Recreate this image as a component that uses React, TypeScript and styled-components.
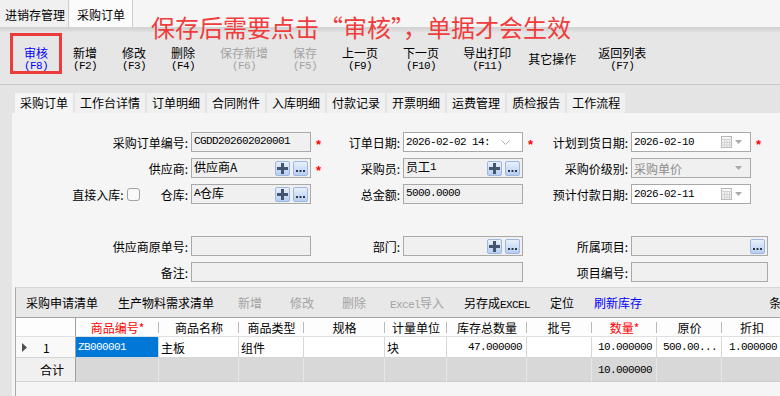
import React from 'react'
import styled, { createGlobalStyle } from 'styled-components'

const SANS = `"Noto Sans CJK SC", "Noto Sans", sans-serif`
const MONO = `"Liberation Mono", "Noto Sans CJK SC", monospace`

const GlobalStyle = createGlobalStyle`
  html, body { margin: 0; padding: 0; background: #f0f0f0; }
  body { font-family: ${SANS}; font-size: 12px; color: #000; }
  * { box-sizing: border-box; }
`

type Tone = 'normal' | 'disabled' | 'primary'
const toneColor = (t?: Tone) =>
  t === 'disabled' ? '#a3a3a3' : t === 'primary' ? '#0000ff' : '#000'

const TOOL_BUTTONS: { title: string; hotkey?: string; tone?: Tone; gap: number }[] = [
  { title: '审核', hotkey: '(F8)', tone: 'primary', gap: 0 },
  { title: '新增', hotkey: '(F2)', gap: 25 },
  { title: '修改', hotkey: '(F3)', gap: 25 },
  { title: '删除', hotkey: '(F4)', gap: 25 },
  { title: '保存新增', hotkey: '(F6)', tone: 'disabled', gap: 25 },
  { title: '保存', hotkey: '(F5)', tone: 'disabled', gap: 25 },
  { title: '上一页', hotkey: '(F9)', gap: 25 },
  { title: '下一页', hotkey: '(F10)', gap: 25 },
  { title: '导出打印', hotkey: '(F11)', gap: 24 },
  { title: '其它操作', gap: 17 },
  { title: '返回列表', hotkey: '(F7)', gap: 22 },
]

const SUB_TABS = ['采购订单', '工作台详情', '订单明细', '合同附件', '入库明细', '付款记录', '开票明细', '运费管理', '质检报告', '工作流程']

const GRID_COLS = [60, 83, 80, 65, 81, 62, 80, 65, 65, 65, 60]
const GRID_HEAD: { title: string; required?: boolean }[] = [
  { title: '商品编号*', required: true },
  { title: '商品名称' },
  { title: '商品类型' },
  { title: '规格' },
  { title: '计量单位' },
  { title: '库存总数量' },
  { title: '批号' },
  { title: '数量*', required: true },
  { title: '原价' },
  { title: '折扣' },
]

const Window = styled.div`
  position: relative;
  width: 780px;
  height: 396px;
  overflow: hidden;
  display: flex;
  flex-direction: column;
  background: #e4e4e4;
  font-family: ${SANS};
  font-size: 12px;
`

const PageTabs = styled.div`
  height: 28px;
  display: flex;
  background: #f5f5f5;
  border-bottom: 1px solid #d4d4d4;
`

const PageTab = styled.div<{ $active?: boolean }>`
  display: flex;
  align-items: center;
  padding: ${({ $active }) => ($active ? '2px 7px 0' : '2px 3px 0 5px')};
  margin-right: ${({ $active }) => ($active ? 0 : 1)}px;
  background: ${({ $active }) => ($active ? '#fbfbfb' : '#f0f0f0')};
  border-right: 1px solid #cfcfcf;
  white-space: nowrap;
`

const Toolbar = styled.div`
  position: relative;
  height: 57px;
  display: flex;
  align-items: center;
  padding: 6px 0 0 24px;
  background: linear-gradient(#d2d2d2, #e6e6e6 5px, #e6e6e6);
  border-bottom: 1px solid #c8c8c8;
`

const ToolButton = styled.div<{ $tone?: Tone; $gap: number }>`
  display: flex;
  flex-direction: column;
  align-items: center;
  margin-left: ${({ $gap }) => $gap}px;
  line-height: 14px;
  color: ${({ $tone }) => toneColor($tone)};
  white-space: nowrap;
`

const Hotkey = styled.span`
  font-family: ${MONO};
  font-size: 11px;
  line-height: 12px;
  letter-spacing: -0.6px;
`

const HighlightBox = styled.div`
  position: absolute;
  left: 10px;
  top: 5px;
  width: 52px;
  height: 41px;
  border: 3px solid #ec3b3b;
`

const Annotation = styled.div`
  position: absolute;
  left: 151px;
  top: 12px;
  font-size: 24px;
  line-height: 30px;
  color: #f03c3c;
  white-space: nowrap;
`

const Body = styled.div`
  flex: 1;
  min-height: 0;
  display: flex;
  flex-direction: column;
  padding-left: 12px;
`

const SubTabs = styled.div`
  height: 28px;
  display: flex;
  gap: 2px;
  padding: 8px 0 0 3px;
`

const SubTab = styled.div<{ $active?: boolean }>`
  height: 20px;
  line-height: 20px;
  padding: 0 5px;
  background: ${({ $active }) => ($active ? '#f5f5f5' : '#f0f0f0')};
  white-space: nowrap;
`

const Panel = styled.div`
  flex: 1;
  display: flex;
  flex-direction: column;
  background: #f5f5f5;
`

const Form = styled.div`
  display: grid;
  grid-template-columns: 179px 120px 20px 72px 120px 20px 88px 120px 29px;
  grid-auto-rows: 20px;
  row-gap: 6px;
  padding-top: 19px;
`

const Label = styled.div`
  display: flex;
  align-items: center;
  justify-content: flex-end;
  padding-right: 3px;
  white-space: nowrap;
`

const Check = styled.span`
  width: 13px;
  height: 13px;
  margin: 0 21px 0 3px;
  border: 1px solid #a2a2a2;
  border-radius: 3px;
  background: #f9f9f9;
`

const Star = styled.div`
  display: flex;
  align-items: center;
  padding: 5px 0 0 5px;
  font-family: "Liberation Sans", sans-serif;
  font-weight: bold;
  font-size: 13px;
  color: #ff0000;
`

const BlankRow = styled.div`
  grid-column: 1 / -1;
`

type FieldTone = 'readonly' | 'white' | 'disabled'

const Field = styled.div<{ $tone?: FieldTone; $span?: number; $width?: number }>`
  grid-column: ${({ $span }) => ($span ? `span ${$span}` : 'auto')};
  width: ${({ $width }) => ($width ? `${$width}px` : 'auto')};
  height: 20px;
  display: flex;
  align-items: center;
  padding: 0 2px;
  border: 1px solid #a9a9a9;
  background: ${({ $tone }) => ($tone === 'white' ? '#fff' : '#f0f0f0')};
  color: ${({ $tone }) => ($tone === 'disabled' ? '#8c8c8c' : '#000')};
  white-space: nowrap;
  overflow: hidden;
`

const Value = styled.span<{ $raise?: boolean }>`
  flex: 1;
  align-self: stretch;
  display: flex;
  align-items: center;
  padding-bottom: ${({ $raise }) => ($raise ? 3 : 0)}px;
`

const Mono = styled.span`
  font-family: ${MONO};
  font-size: 11px;
  letter-spacing: -0.6px;
`

const MiniButton = styled.span`
  width: 15px;
  height: 15px;
  margin-left: 3px;
  display: inline-flex;
  align-items: center;
  justify-content: center;
  border: 1px solid #9db7e0;
  border-radius: 2px;
  background: linear-gradient(#e8f0fc, #b7cef2);
`

const IconSlot = styled.span<{ $right: number }>`
  display: flex;
  align-items: center;
  gap: 3px;
  margin-right: ${({ $right }) => $right}px;
`

const GridSection = styled.div`
  flex: 1;
  margin: 5px 0 0 3px;
  border-left: 1px solid #a9a9a9;
  border-top: 1px solid #d6d6d6;
  background: #f5f5f5;
`

const GridToolbar = styled.div`
  height: 30px;
  display: flex;
  align-items: center;
  background: #e8e8e8;
  border-bottom: 1px solid #a3a3a3;
  white-space: nowrap;
`

const GridTool = styled.div<{ $tone?: Tone; $wide?: boolean; $push?: number }>`
  display: flex;
  align-items: baseline;
  justify-content: center;
  min-width: ${({ $wide }) => ($wide ? '52px' : 'auto')};
  padding: ${({ $wide }) => ($wide ? 0 : '0 10px')};
  margin-left: ${({ $push }) => $push ?? 0}px;
  color: ${({ $tone }) => toneColor($tone)};
`

const Grid = styled.div`
  display: grid;
  grid-template-columns: ${GRID_COLS.map((c) => `${c}px`).join(' ')};
  grid-template-rows: 19px 21px 24px;
  width: max-content;
`

const HeadCell = styled.div<{ $required?: boolean }>`
  position: relative;
  display: flex;
  align-items: center;
  justify-content: center;
  background: #fdfdfd;
  border-bottom: 1px solid #e0e0e0;
  color: ${({ $required }) => ($required ? '#ff0000' : '#000')};
  white-space: nowrap;
  &::after {
    content: '';
    position: absolute;
    right: 0;
    top: 4px;
    bottom: 3px;
    width: 1px;
    background: #b9b9b9;
  }
`

const RowHead = styled.div<{ $total?: boolean; $head?: boolean }>`
  display: flex;
  align-items: center;
  justify-content: ${({ $total }) => ($total ? 'flex-end' : 'flex-start')};
  padding: ${({ $total }) => ($total ? '0 11px 0 0' : '0 0 0 6px')};
  background: ${({ $total, $head }) => ($head ? '#fdfdfd' : $total ? '#f0f0f0' : '#f9f9f9')};
  border-right: 1px solid #9d9d9d;
  border-bottom: 1px solid ${({ $head }) => ($head ? '#e0e0e0' : '#d4d4d4')};
`

const RowNo = styled.span`
  margin-left: 16px;
`

const Cell = styled.div<{ $right?: boolean; $selected?: boolean; $total?: boolean }>`
  display: flex;
  align-items: center;
  justify-content: ${({ $right }) => ($right ? 'flex-end' : 'flex-start')};
  padding: 0 4px 0 2px;
  background: ${({ $selected, $total }) => ($selected ? '#0078d7' : $total ? '#d8d8d8' : '#fff')};
  color: ${({ $selected }) => ($selected ? '#fff' : '#000')};
  border-right: 1px solid ${({ $total }) => ($total ? '#e6e6e6' : '#d6d6d6')};
  border-bottom: 1px solid ${({ $total }) => ($total ? '#cccccc' : '#d6d6d6')};
  white-space: nowrap;
  overflow: hidden;
`

const PlusIcon = () => (
  <svg width="11" height="11" viewBox="0 0 11 11">
    <path d="M4 0h3v4h4v3H7v4H4V7H0V4h4z" fill="#44566f" />
  </svg>
)

const DotsIcon = () => (
  <svg width="11" height="11" viewBox="0 0 11 11">
    <rect x="1" y="7" width="2" height="2" fill="#2c3a50" />
    <rect x="4.5" y="7" width="2" height="2" fill="#2c3a50" />
    <rect x="8" y="7" width="2" height="2" fill="#2c3a50" />
  </svg>
)

const Lookup: React.FC<{ plus?: boolean }> = ({ plus = true }) => (
  <>
    {plus && (
      <MiniButton>
        <PlusIcon />
      </MiniButton>
    )}
    <MiniButton>
      <DotsIcon />
    </MiniButton>
  </>
)

const Chevron = () => (
  <svg width="9" height="5" viewBox="0 0 9 5">
    <polyline points="0.5,0.5 4.5,4.5 8.5,0.5" fill="none" stroke="#b4b4b4" />
  </svg>
)

const DropTriangle = () => (
  <svg width="7" height="4" viewBox="0 0 7 4">
    <path d="M0 0h7L3.5 4z" fill="#a9a9a9" />
  </svg>
)

const CalendarIcon = () => (
  <svg width="11" height="12" viewBox="0 0 11 12">
    <rect x="0.5" y="0.5" width="10" height="11" fill="#f6f6f6" stroke="#b7b7b7" />
    <path d="M0.5 3.5h10M0.5 6.5h10M0.5 9h10M3.5 3.5v8M6 3.5v8M8.5 3.5v8" stroke="#d2d2d2" />
  </svg>
)

const RowArrow = () => (
  <svg width="5" height="9" viewBox="0 0 5 9">
    <path d="M0 0l5 4.5L0 9z" fill="#4f4f4f" />
  </svg>
)

const DateField: React.FC<{ value: string }> = ({ value }) => (
  <Field $tone="white">
    <Value>
      <Mono>{value}</Mono>
    </Value>
    <IconSlot $right={6}>
      <CalendarIcon />
      <DropTriangle />
    </IconSlot>
  </Field>
)

const App: React.FC = () => {
  return (
    <>
      <GlobalStyle />
      <Window>
        <PageTabs>
          <PageTab>进销存管理</PageTab>
          <PageTab $active>采购订单</PageTab>
        </PageTabs>

        <Toolbar>
          <HighlightBox />
          {TOOL_BUTTONS.map((b) => (
            <ToolButton key={b.title} $tone={b.tone} $gap={b.gap}>
              <span>{b.title}</span>
              {b.hotkey && <Hotkey>{b.hotkey}</Hotkey>}
            </ToolButton>
          ))}
        </Toolbar>

        <Annotation>保存后需要点击“审核”，单据才会生效</Annotation>

        <Body>
          <SubTabs>
            {SUB_TABS.map((t, i) => (
              <SubTab key={t} $active={i === 0}>
                {t}
              </SubTab>
            ))}
          </SubTabs>

          <Panel>
            <Form>
              <Label>采购订单编号:</Label>
              <Field $tone="readonly">
                <Value $raise>
                  <Mono>CGDD202602020001</Mono>
                </Value>
              </Field>
              <Star>*</Star>
              <Label>订单日期:</Label>
              <Field $tone="white">
                <Value>
                  <Mono>2026-02-02 14:</Mono>
                </Value>
                <IconSlot $right={10}>
                  <Chevron />
                </IconSlot>
              </Field>
              <Star>*</Star>
              <Label>计划到货日期:</Label>
              <DateField value="2026-02-10" />
              <Star>*</Star>

              <Label>供应商:</Label>
              <Field $tone="readonly">
                <Value $raise>供应商A</Value>
                <Lookup />
              </Field>
              <Star>*</Star>
              <Label>采购员:</Label>
              <Field $tone="readonly">
                <Value $raise>
                  员工<Mono>1</Mono>
                </Value>
                <Lookup />
              </Field>
              <Star />
              <Label>采购价级别:</Label>
              <Field $tone="disabled">
                <Value>采购单价</Value>
                <IconSlot $right={6}>
                  <DropTriangle />
                </IconSlot>
              </Field>
              <Star />

              <Label>
                直接入库:
                <Check />
                仓库:
              </Label>
              <Field $tone="readonly">
                <Value $raise>
                  <Mono>A</Mono>仓库
                </Value>
                <Lookup />
              </Field>
              <Star />
              <Label>总金额:</Label>
              <Field $tone="readonly">
                <Value $raise>
                  <Mono>5000.0000</Mono>
                </Value>
              </Field>
              <Star />
              <Label>预计付款日期:</Label>
              <DateField value="2026-02-11" />
              <Star />

              <BlankRow />

              <Label>供应商原单号:</Label>
              <Field $tone="readonly" />
              <Star />
              <Label>部门:</Label>
              <Field $tone="readonly">
                <Value />
                <Lookup />
              </Field>
              <Star />
              <Label>所属项目:</Label>
              <Field $tone="readonly" $span={2} $width={137}>
                <Value />
                <Lookup plus={false} />
              </Field>

              <Label>备注:</Label>
              <Field $tone="readonly" $span={4} />
              <Star />
              <Label>项目编号:</Label>
              <Field $tone="readonly" $span={2} $width={137} />
            </Form>

            <GridSection>
              <GridToolbar>
                <GridTool>采购申请清单</GridTool>
                <GridTool>生产物料需求清单</GridTool>
                <GridTool $wide $tone="disabled">新增</GridTool>
                <GridTool $wide $tone="disabled">修改</GridTool>
                <GridTool $wide $tone="disabled">删除</GridTool>
                <GridTool $tone="disabled">
                  <Mono>Excel</Mono>
                  <span>导入</span>
                </GridTool>
                <GridTool>
                  <span>另存成</span>
                  <Mono>EXCEL</Mono>
                </GridTool>
                <GridTool>定位</GridTool>
                <GridTool $tone="primary">刷新库存</GridTool>
                <GridTool $push={107}>条码录入</GridTool>
              </GridToolbar>

              <Grid>
                <RowHead $head />
                {GRID_HEAD.map((h) => (
                  <HeadCell key={h.title} $required={h.required}>
                    {h.title}
                  </HeadCell>
                ))}

                <RowHead>
                  <RowArrow />
                  <RowNo>1</RowNo>
                </RowHead>
                <Cell $selected>
                  <Mono>ZB000001</Mono>
                </Cell>
                <Cell>主板</Cell>
                <Cell>组件</Cell>
                <Cell />
                <Cell>块</Cell>
                <Cell $right>
                  <Mono>47.000000</Mono>
                </Cell>
                <Cell />
                <Cell $right>
                  <Mono>10.000000</Mono>
                </Cell>
                <Cell $right>
                  <Mono>500.00...</Mono>
                </Cell>
                <Cell $right>
                  <Mono>1.000000</Mono>
                </Cell>

                <RowHead $total>合计</RowHead>
                <Cell $total />
                <Cell $total />
                <Cell $total />
                <Cell $total />
                <Cell $total />
                <Cell $total />
                <Cell $total />
                <Cell $total $right>
                  <Mono>10.000000</Mono>
                </Cell>
                <Cell $total />
                <Cell $total />
              </Grid>
            </GridSection>
          </Panel>
        </Body>
      </Window>
    </>
  )
}

export default App
